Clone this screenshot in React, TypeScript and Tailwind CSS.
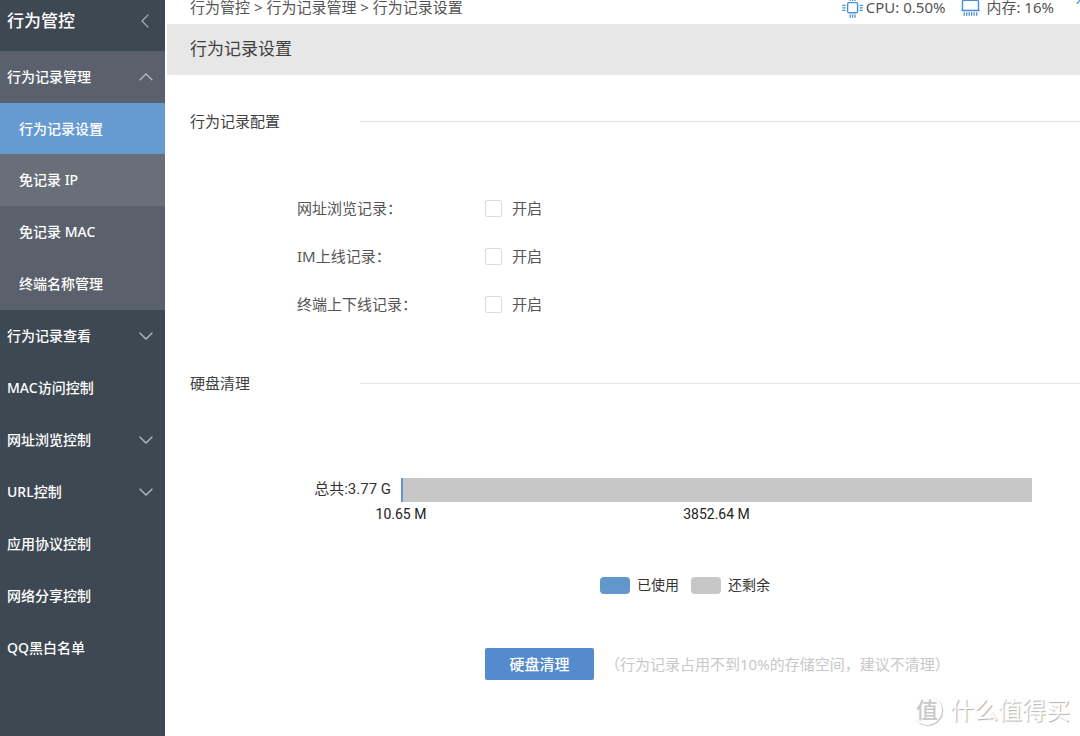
import { useState } from "react";
import clsx from "clsx";

type MenuItem = {
  label: string;
  arrow?: "up" | "down";
};

const subMenu = ["行为记录设置", "免记录 IP", "免记录 MAC", "终端名称管理"];

const menu: MenuItem[] = [
  { label: "行为记录查看", arrow: "down" },
  { label: "MAC访问控制" },
  { label: "网址浏览控制", arrow: "down" },
  { label: "URL控制", arrow: "down" },
  { label: "应用协议控制" },
  { label: "网络分享控制" },
  { label: "QQ黑白名单" },
];

const options = [
  { id: "web", label: "网址浏览记录：" },
  { id: "im", label: "IM上线记录：" },
  { id: "terminal", label: "终端上下线记录：" },
];

const disk = { total: "3.77 G", used: 10.65, free: 3852.64 };

function Arrow({ dir }: { dir: "up" | "down" }) {
  return (
    <svg className="h-2 w-[14px]" viewBox="0 0 14 8" fill="none" stroke="#b4b9bf" strokeWidth="1.3">
      <path d={dir === "up" ? "M0.6 7.3 7 1l6.4 6.3" : "M0.6 0.7 7 7l6.4-6.3"} />
    </svg>
  );
}

function CpuIcon() {
  return (
    <svg className="h-[18px] w-[21px]" viewBox="0 0 21 18" fill="none" stroke="#4b8fd6">
      <rect x="5.6" y="2.6" width="10" height="10.2" rx="1.4" strokeWidth="1.4" />
      <path d="M0.2 5.3h3.2M0.2 7.8h3.2M0.2 10.3h3.2M17.6 5.3h3.2M17.6 7.8h3.2M17.6 10.3h3.2" strokeWidth="1.2" />
      <path d="M8.2 0v1M10.6 0v1M13 0v1M8.2 14.6v3.2M10.6 14.6v3.2M13 14.6v3.2" strokeWidth="1.3" />
    </svg>
  );
}

function MemoryIcon() {
  return (
    <svg className="h-[18px] w-[19px]" viewBox="0 0 19 18" fill="none" stroke="#4b8fd6">
      <path d="M1.5 10V1.6Q1.5 0.4 2.7 0.4h13.6Q17.5 0.4 17.5 1.6V10" strokeWidth="1.4" />
      <path d="M0.4 10.5h18.2" strokeWidth="1.6" />
      <path d="M3.2 12.2v3.6M5.7 12.2v3.6M8.2 12.2v3.6M10.7 12.2v3.6M13.2 12.2v3.6M15.7 12.2v3.6" strokeWidth="1.3" />
    </svg>
  );
}

function Sidebar() {
  return (
    <nav className="w-[165px] shrink-0 bg-[#3e4853] text-sm font-medium text-white">
      <div className="flex h-[51px] items-start justify-between pt-[9px] pr-4 pl-[7px] text-[17px]">
        <span className="leading-6">行为管控</span>
        <button type="button" aria-label="收起菜单" className="mt-[5px]">
          <svg className="h-[14px] w-2" viewBox="0 0 8 14" fill="none" stroke="#a7adb4" strokeWidth="1.3">
            <path d="M7.3 0.6 1 7l6.3 6.4" />
          </svg>
        </button>
      </div>

      <div className="bg-[#5a616c]">
        <button type="button" className="flex h-[52px] w-full items-center justify-between pr-3 pl-[7px]">
          行为记录管理
          <Arrow dir="up" />
        </button>
        {subMenu.map((label, idx) => (
          <a
            key={label}
            href="#"
            className={clsx(
              "flex items-center pl-[19px]",
              idx === 0 && "h-[51px] bg-[#659bd1]",
              idx === 1 && "h-[52px] bg-[#696f79]",
              idx > 1 && "h-[52px]"
            )}
          >
            {label}
          </a>
        ))}
      </div>

      {menu.map((item) => (
        <a key={item.label} href="#" className="flex h-[52px] items-center justify-between pr-3 pl-[7px]">
          {item.label}
          {item.arrow && <Arrow dir={item.arrow} />}
        </a>
      ))}
    </nav>
  );
}

function SectionTitle({ children }: { children: string }) {
  return (
    <div className="flex items-center pl-[25px]">
      <h2 className="w-[170px] shrink-0 leading-6 text-[#404040]">{children}</h2>
      <div className="h-px flex-1 bg-[#e3e3e3]" />
    </div>
  );
}

function DiskChart() {
  const usedPercent = (disk.used / (disk.used + disk.free)) * 100;

  return (
    <div className="pr-12 font-[Roboto,'Noto_Sans_CJK_SC',sans-serif] text-sm text-[#333]">
      <div className="flex items-center">
        <span className="w-[226px] shrink-0 text-right text-[15px]">总共:{disk.total}</span>
        <div className="ml-[10px] flex h-6 flex-1 bg-[#c7c7c7]">
          <div className="bg-[#6197cc]" style={{ width: `${usedPercent}%` }} />
        </div>
      </div>
      <div className="ml-[236px] grid pt-0.5 text-[#222]">
        <span className="col-start-1 row-start-1 -ml-[26px] w-[52px] text-center whitespace-nowrap">{disk.used} M</span>
        <span className="col-start-1 row-start-1 justify-self-center">{disk.free} M</span>
      </div>
      <div className="-mr-12 ml-[125px] flex items-center justify-center pt-[51px]">
        <span className="h-[17px] w-[30px] rounded bg-[#6197cc]" />
        <span className="ml-[7px]">已使用</span>
        <span className="ml-3 h-[17px] w-[30px] rounded bg-[#c7c7c7]" />
        <span className="ml-[7px]">还剩余</span>
      </div>
    </div>
  );
}

export default function App() {
  const [checked, setChecked] = useState<Record<string, boolean>>({});

  return (
    <div className="relative flex min-h-screen bg-white font-['Noto_Sans','Noto_Sans_CJK_SC',sans-serif] text-[15px] text-[#555]">
      <Sidebar />

      <main className="min-w-0 flex-1">
        <div className="flex h-6 items-start justify-between pl-[25px] leading-[14px] text-[#555]">
          <div className="whitespace-nowrap">行为管控 &gt; 行为记录管理 &gt; 行为记录设置</div>
          <div className="flex items-start whitespace-nowrap">
            <CpuIcon />
            <span className="ml-[3px]">CPU: 0.50%</span>
            <span className="ml-4">
              <MemoryIcon />
            </span>
            <span className="ml-1.5">内存: 16%</span>
            <svg className="ml-[22px] h-1 w-1" viewBox="0 0 4 4" fill="none" stroke="#4b8fd6" strokeWidth="1.3">
              <path d="M1 4 4 0" />
            </svg>
          </div>
        </div>

        <h1 className="ml-0.5 flex h-[51px] items-center bg-[#e7e7e7] pb-0.5 pl-[23px] text-[17px] text-[#404040]">
          行为记录设置
        </h1>

        <div className="pt-[34px]">
          <SectionTitle>行为记录配置</SectionTitle>
          <div className="pt-[51px] pl-[132px]">
            {options.map((option) => (
              <div key={option.id} className="flex h-12 items-center">
                <span className="w-[188px]">{option.label}</span>
                <label className="flex items-center gap-[10px]">
                  <input
                    type="checkbox"
                    aria-label={`${option.label}开启`}
                    checked={!!checked[option.id]}
                    onChange={(e) => setChecked({ ...checked, [option.id]: e.target.checked })}
                    className="size-[17px] appearance-none rounded-xs border border-[#dcdcdc] bg-white checked:bg-[#548bcc]"
                  />
                  开启
                </label>
              </div>
            ))}
          </div>
        </div>

        <div className="pt-[43px]">
          <SectionTitle>硬盘清理</SectionTitle>
          <div className="pt-[83px]">
            <DiskChart />
          </div>
          <div className="flex items-center pt-[53px] pl-80">
            <button type="button" className="h-8 w-[109px] rounded-xs bg-[#548bcc] font-medium text-white">
              硬盘清理
            </button>
            <span className="ml-[11px] text-[#c8c8c8]">（行为记录占用不到10%的存储空间，建议不清理）</span>
          </div>
        </div>
      </main>

      {/* watermark */}
      <div className="absolute right-[10px] bottom-[10px] flex items-center gap-2 text-2xl text-white [text-shadow:1px_1px_1px_#b0b0b0]">
        <span className="flex size-[30px] items-center justify-center rounded-full text-[22px] font-medium text-[#c8c8c8] shadow-[1px_1px_1px_#c0c0c0] [text-shadow:none]">
          值
        </span>
        什么值得买
      </div>
    </div>
  );
}
